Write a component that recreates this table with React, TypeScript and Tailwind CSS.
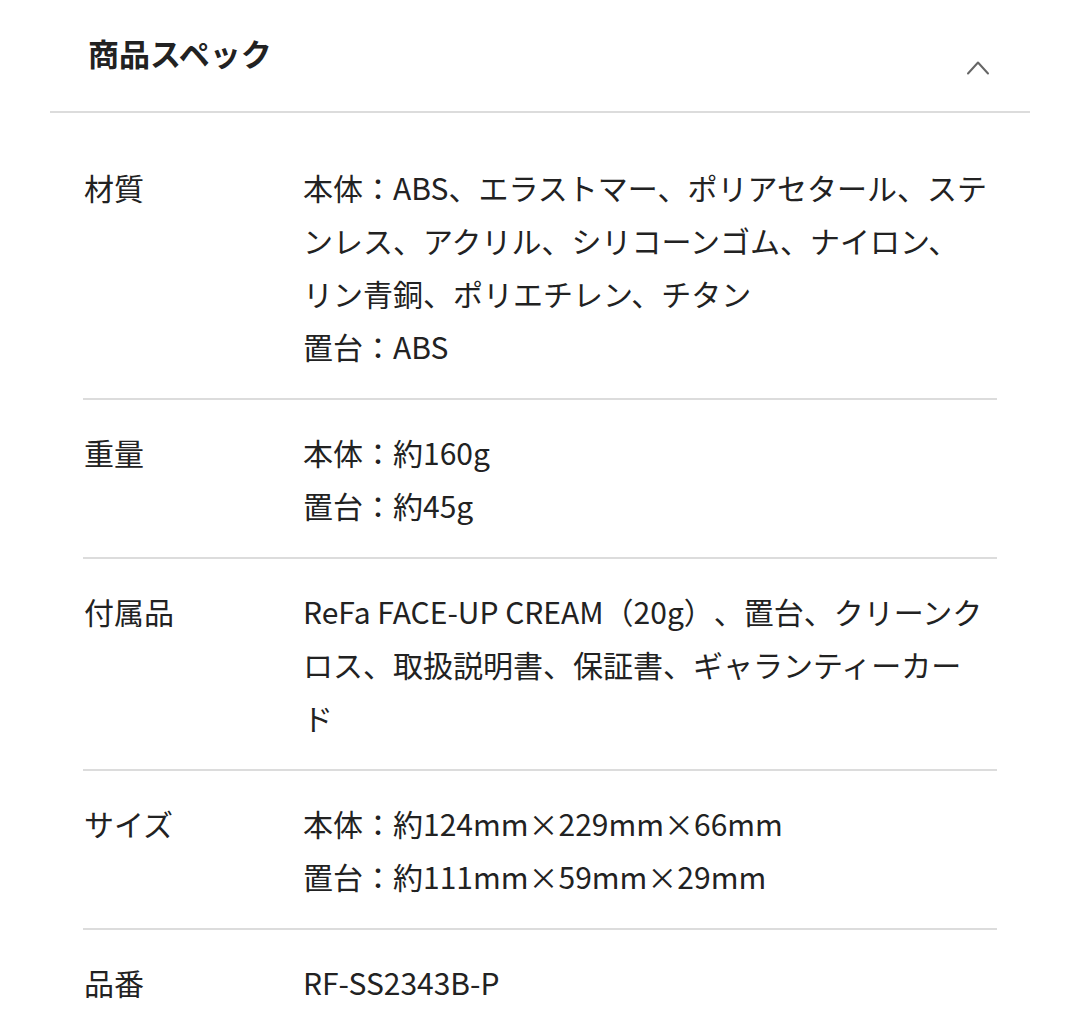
import React from 'react';

type Spec = {
  label: string;
  lines: string[];
};

const specs: Spec[] = [
  {
    label: '材質',
    lines: [
      '本体：ABS、エラストマー、ポリアセタール、ステ',
      'ンレス、アクリル、シリコーンゴム、ナイロン、',
      'リン青銅、ポリエチレン、チタン',
      '置台：ABS',
    ],
  },
  { label: '重量', lines: ['本体：約160g', '置台：約45g'] },
  {
    label: '付属品',
    lines: [
      'ReFa FACE-UP CREAM（20g）、置台、クリーンク',
      'ロス、取扱説明書、保証書、ギャランティーカー',
      'ド',
    ],
  },
  {
    label: 'サイズ',
    lines: ['本体：約124mm×229mm×66mm', '置台：約111mm×59mm×29mm'],
  },
  { label: '品番', lines: ['RF-SS2343B-P'] },
];

export default function App() {
  return (
    <div
      className="min-h-[1022px] w-[1080px] bg-white px-[50px] text-[#222] [text-spacing-trim:space-all]"
      style={{ fontFamily: '"Noto Sans CJK JP", "Noto Sans", sans-serif' }}
    >
      {/* Header */}
      <div className="flex h-[113px] items-start justify-between border-b-2 border-[#dcdcdc] pl-[38px] pr-[40px] pt-[30px]">
        <h2 className="text-[31px] font-bold leading-[45px]">商品スペック</h2>
        <svg className="mt-[25px] h-6 w-6 text-[#666]" viewBox="0 0 24 24" fill="none" stroke="currentColor">
          <path d="M2 18.5l10-11 10 11" strokeWidth="2" strokeLinecap="round" strokeLinejoin="round" />
        </svg>
      </div>

      {/* Spec rows */}
      <div className="px-[33px] pt-[22px]">
        {specs.map((spec, i) => (
          <div
            key={spec.label}
            className={
              i < specs.length - 1
                ? 'flex border-b-2 border-[#dcdcdc] pb-[25px] pt-[26px]'
                : 'flex pb-[25px] pt-[26px]'
            }
          >
            <div className="w-[220px] shrink-0 pl-px text-[30px] leading-[53px]">{spec.label}</div>
            <div className="flex-1 text-[30px] leading-[53px]">
              {spec.lines.map((line) => (
                <div key={line} className="whitespace-nowrap">
                  {line}
                </div>
              ))}
            </div>
          </div>
        ))}
      </div>
    </div>
  );
}
